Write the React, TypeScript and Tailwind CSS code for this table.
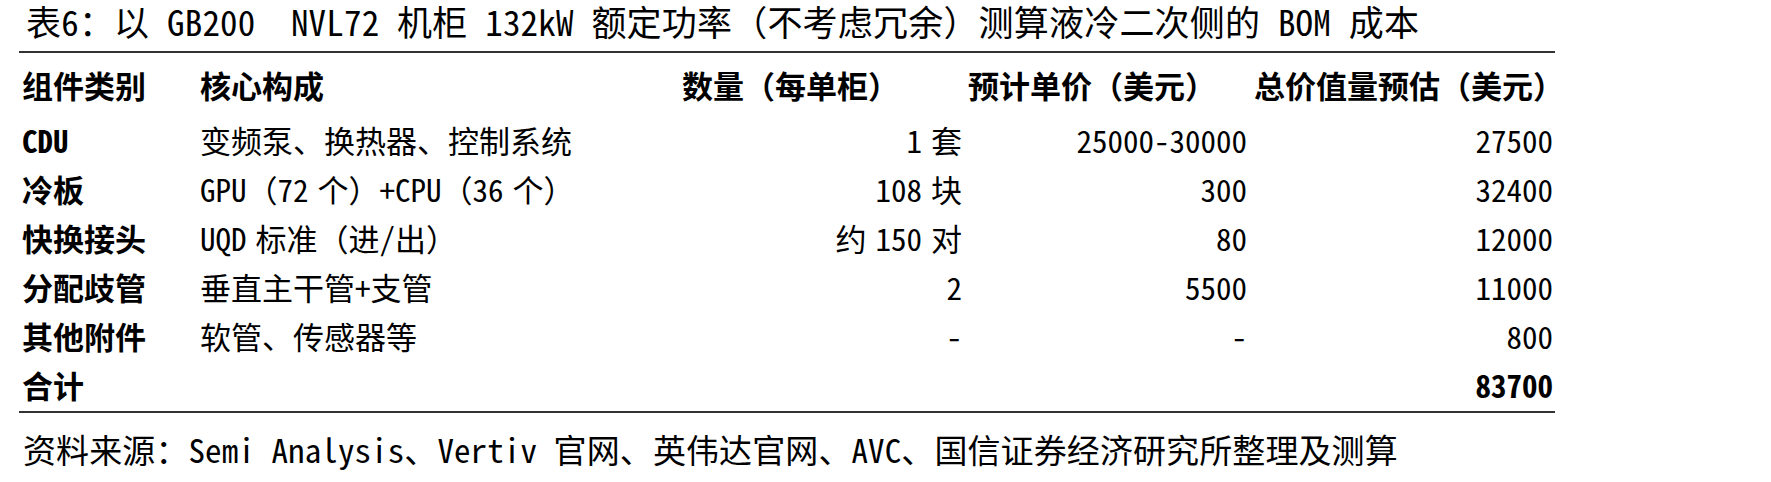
import React from "react";

type Row = { name: string; desc: string; qty: string; unit: string; total: string; bold?: boolean };

const rows: Row[] = [
  { name: "CDU", desc: "变频泵、换热器、控制系统", qty: "1 套", unit: "25000-30000", total: "27500" },
  { name: "冷板", desc: "GPU（72 个）+CPU（36 个）", qty: "108 块", unit: "300", total: "32400" },
  { name: "快换接头", desc: "UQD 标准（进/出）", qty: "约 150 对", unit: "80", total: "12000" },
  { name: "分配歧管", desc: "垂直主干管+支管", qty: "2", unit: "5500", total: "11000" },
  { name: "其他附件", desc: "软管、传感器等", qty: "-", unit: "-", total: "800" },
  { name: "合计", desc: "", qty: "", unit: "", total: "83700", bold: true },
];

const grid = "grid grid-cols-[178px_482px_286px_285px_305px]";

function Thin({ text }: { text: string }) {
  const parts = text.split(" ");
  return (
    <>
      {parts.map((p, i) => (
        <React.Fragment key={i}>
          {i > 0 && <span className="inline-block w-[9px]" />}
          {p}
        </React.Fragment>
      ))}
    </>
  );
}

export default function App() {
  return (
    <div className="w-[1771px] h-[482px] bg-white text-black font-['Noto_Sans_Mono_CJK_SC','Noto_Sans_CJK_SC',monospace]">
      <div className="w-[1536px] pl-[19px] box-content">
        <div className="h-[51px] pl-[7px] text-[35px] leading-[42px] tracking-[0.2px] whitespace-nowrap text-black">
          表6：以 GB200&nbsp;&nbsp;NVL72 机柜 132kW 额定功率（不考虑冗余）测算液冷二次侧的 BOM 成本
        </div>
        <div className="border-t-2 border-b-2 border-[#333333]">
          <div className={`${grid} h-[64px] items-center font-bold text-[31px] whitespace-nowrap`}>
            <div className="pl-[3px]">组件类别</div>
            <div className="pl-[3px]">核心构成</div>
            <div className="pl-[3px]">数量（每单柜）</div>
            <div className="pl-[3px]">预计单价（美元）</div>
            <div className="pl-[4px]">总价值量预估（美元）</div>
          </div>
          {rows.map((r) => (
            <div key={r.name} className={`${grid} h-[49px] items-center pb-[4px] text-[31px] whitespace-nowrap`}>
              <div className="pl-[3px] font-bold">{r.name}</div>
              <div className="pl-[3px]">
                <Thin text={r.desc} />
              </div>
              <div className="pr-[3px] text-right">
                <Thin text={r.qty} />
              </div>
              <div className="pr-[3px] text-right">{r.unit}</div>
              <div className={`pr-[2px] text-right ${r.bold ? "font-bold" : ""}`}>{r.total}</div>
            </div>
          ))}
        </div>
        <div className="h-[69px] pl-[4px] text-[33px] leading-[72px] tracking-[0.1px] whitespace-nowrap text-black">
          资料来源：Semi Analysis、Vertiv 官网、英伟达官网、AVC、国信证券经济研究所整理及测算
        </div>
      </div>
    </div>
  );
}
